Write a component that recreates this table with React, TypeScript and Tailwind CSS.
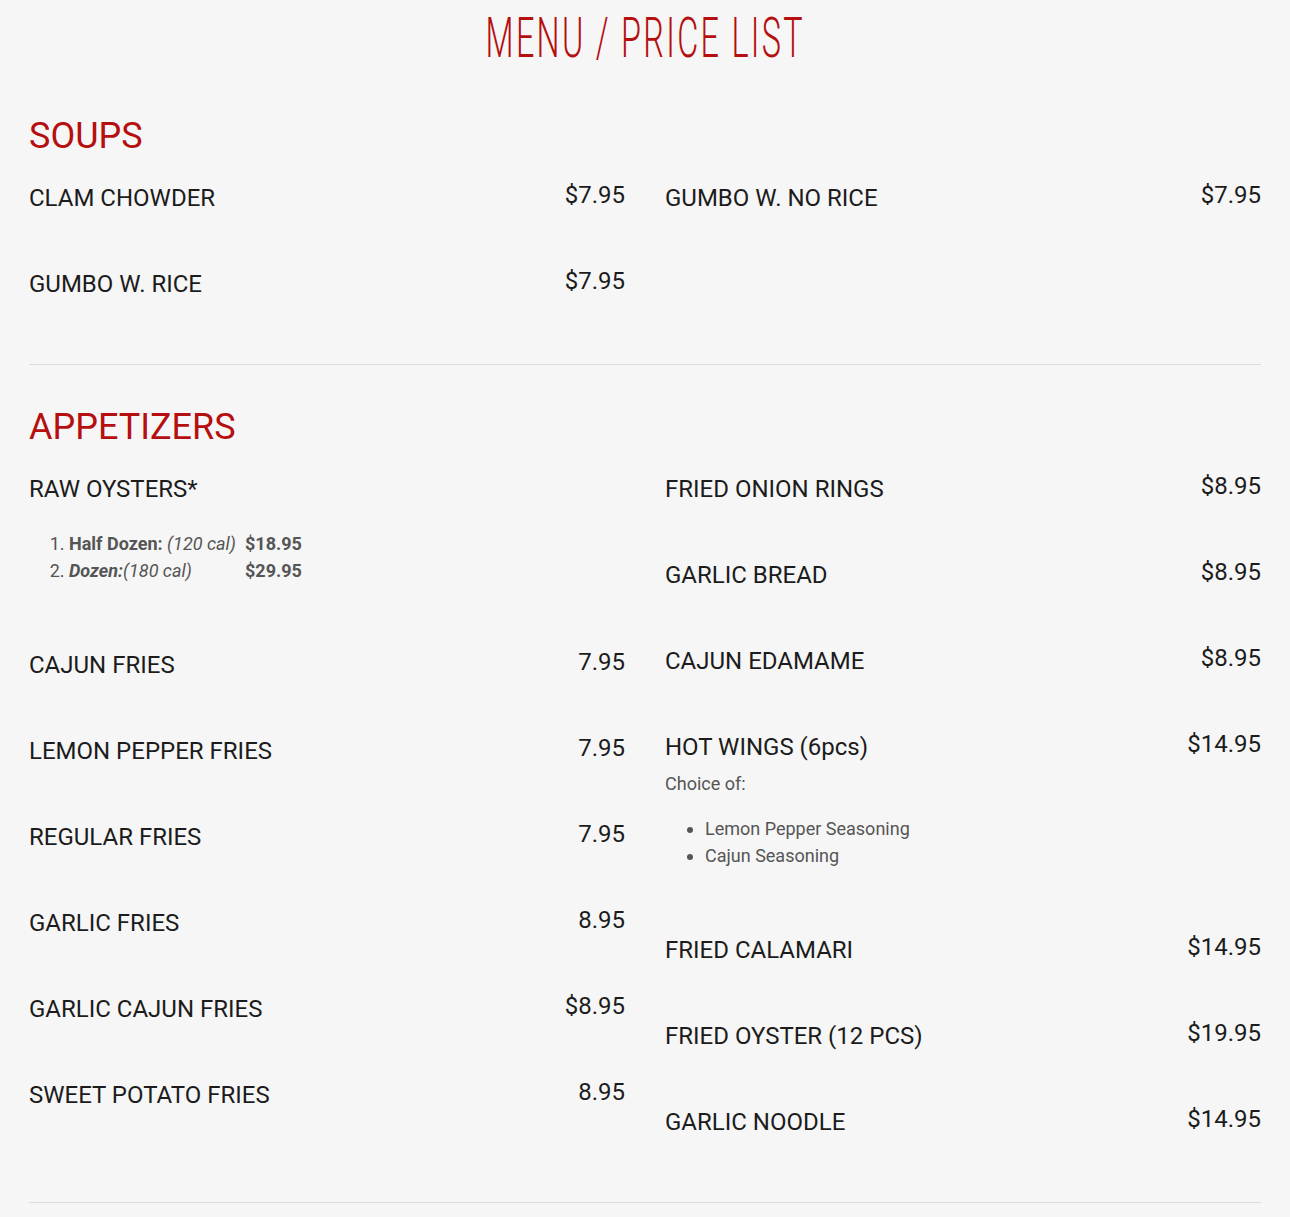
import React from "react";

type Item = {
  name: string;
  price: string;
  extra?: React.ReactNode;
};

const OysterList = () => (
  <ol className="mt-[26px] list-decimal pl-[40px] text-[18px] leading-[27px] text-[#555]">
    <li>
      <span className="inline-block w-[176px]">
        <b>Half Dozen:</b> <i>(120 cal)</i>
      </span>
      <b>$18.95</b>
    </li>
    <li>
      <span className="inline-block w-[176px]">
        <b>
          <i>Dozen:</i>
        </b>
        <i>(180 cal)</i>
      </span>
      <b>$29.95</b>
    </li>
  </ol>
);

const WingChoices = () => (
  <div className="mt-[8px] text-[18px] leading-[27px] text-[#555]">
    <p>Choice of:</p>
    <ul className="mt-[18px] list-disc pl-[40px]">
      <li>Lemon Pepper Seasoning</li>
      <li>Cajun Seasoning</li>
    </ul>
  </div>
);

const SOUPS_LEFT: Item[] = [
  { name: "CLAM CHOWDER", price: "$7.95" },
  { name: "GUMBO W. RICE", price: "$7.95" },
];

const SOUPS_RIGHT: Item[] = [{ name: "GUMBO W. NO RICE", price: "$7.95" }];

const APPS_LEFT: Item[] = [
  { name: "RAW OYSTERS*", price: "", extra: <OysterList /> },
  { name: "CAJUN FRIES", price: "7.95" },
  { name: "LEMON PEPPER FRIES", price: "7.95" },
  { name: "REGULAR FRIES", price: "7.95" },
  { name: "GARLIC FRIES", price: "8.95" },
  { name: "GARLIC CAJUN FRIES", price: "$8.95" },
  { name: "SWEET POTATO FRIES", price: "8.95" },
];

const APPS_RIGHT: Item[] = [
  { name: "FRIED ONION RINGS", price: "$8.95" },
  { name: "GARLIC BREAD", price: "$8.95" },
  { name: "CAJUN EDAMAME", price: "$8.95" },
  { name: "HOT WINGS (6pcs)", price: "$14.95", extra: <WingChoices /> },
  { name: "FRIED CALAMARI", price: "$14.95" },
  { name: "FRIED OYSTER (12 PCS)", price: "$19.95" },
  { name: "GARLIC NOODLE", price: "$14.95" },
];

const MenuItem: React.FC<{ item: Item }> = ({ item }) => (
  <div className={item.extra ? "pb-[66px]" : "pb-[56px]"}>
    <div className="flex items-start justify-between">
      <span className="text-[24px] leading-[30px] text-[#1c1c1c]">{item.name}</span>
      <span className="text-[24px] leading-[24px] text-[#1c1c1c]">{item.price}</span>
    </div>
    {item.extra}
  </div>
);

const Section: React.FC<{ title: string; left: Item[]; right: Item[] }> = ({
  title,
  left,
  right,
}) => (
  <section className="border-b border-[#dcdcdc] pb-[9px]">
    <h2 className="text-[36px] leading-[44px] text-[#b50f0f]">{title}</h2>
    <div className="mt-[25px] grid grid-cols-2 items-start gap-x-[40px]">
      <div>
        {left.map((it) => (
          <MenuItem key={it.name} item={it} />
        ))}
      </div>
      <div>
        {right.map((it) => (
          <MenuItem key={it.name} item={it} />
        ))}
      </div>
    </div>
  </section>
);

export default function App() {
  return (
    <div
      className="min-h-[1217px] bg-[#f6f6f6] px-[29px]"
      style={{ fontFamily: "Roboto, 'Liberation Sans', sans-serif" }}
    >
      <h1 className="flex justify-center pt-[6px]">
        <span className="inline-block origin-center scale-x-[0.578] whitespace-nowrap text-[56px] font-light leading-[64px] tracking-[4px] text-[#b50f0f]">
          MENU / PRICE LIST
        </span>
      </h1>
      <div className="mt-[44px]">
        <Section title="SOUPS" left={SOUPS_LEFT} right={SOUPS_RIGHT} />
        <div className="mt-[40px]">
          <Section title="APPETIZERS" left={APPS_LEFT} right={APPS_RIGHT} />
        </div>
      </div>
    </div>
  );
}
